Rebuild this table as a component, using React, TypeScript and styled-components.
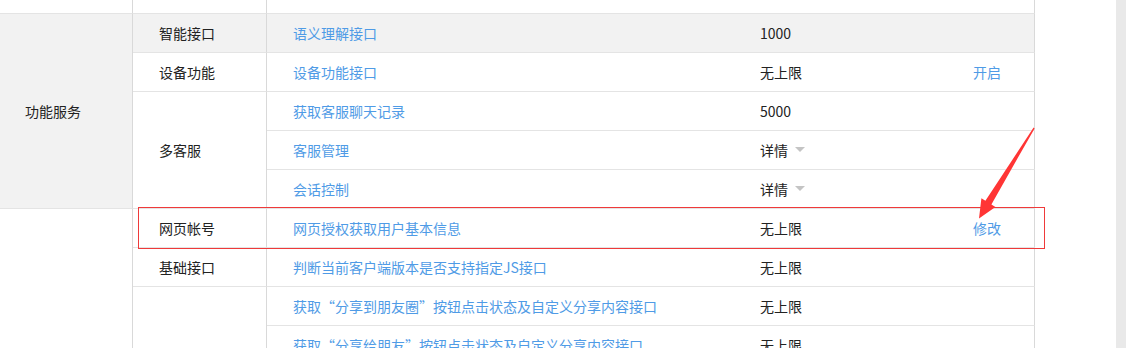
import React from "react";
import styled, { createGlobalStyle } from "styled-components";

const GlobalStyle = createGlobalStyle`
  html, body {
    margin: 0;
    padding: 0;
    background: #ffffff;
  }
  body {
    font-family: "Noto Sans CJK SC", "Noto Sans", sans-serif;
    font-size: 14px;
    color: #222222;
  }
`;

const Page = styled.div`
  display: flex;
  height: 348px;
  overflow: hidden;
`;

const Main = styled.div`
  position: relative;
  flex: 1;
  overflow: hidden;
`;

const SideStrip = styled.div`
  width: 10px;
  flex: none;
  background: #e9e9e9;
`;

const Table = styled.table`
  width: 1035px;
  margin-top: -25px;
  table-layout: fixed;
  border-collapse: separate;
  border-spacing: 0;
  font-size: 14px;
`;

const Row = styled.tr<{ $active?: boolean }>`
  background: ${(p) => (p.$active ? "#f2f2f2" : "transparent")};
`;

const Cell = styled.td<{ $pad?: number; $divider?: boolean; $shade?: boolean }>`
  height: 37px;
  padding: 0 0 1px ${(p) => p.$pad ?? 27}px;
  border-bottom: 1px solid #e4e4e4;
  border-right: ${(p) => (p.$divider ? "1px solid #d9d9d9" : "none")};
  background: ${(p) => (p.$shade ? "#f2f2f2" : "transparent")};
  vertical-align: middle;
  white-space: nowrap;
  overflow: hidden;
  line-height: 20px;
`;

const Link = styled.a`
  color: #4f9be6;
  text-decoration: none;
  cursor: pointer;
`;

const Detail = styled.span`
  display: inline-flex;
  align-items: center;
  gap: 7px;
`;

const Caret = styled.i`
  display: inline-block;
  width: 0;
  height: 0;
  border-left: 5px solid transparent;
  border-right: 5px solid transparent;
  border-top: 5px solid #c4c4c4;
`;

const Highlight = styled.div`
  position: absolute;
  left: 138px;
  top: 207px;
  width: 905px;
  height: 40px;
  border: 1px solid #ef3a3a;
  pointer-events: none;
`;

const ArrowLayer = styled.svg`
  position: absolute;
  left: 0;
  top: 0;
  pointer-events: none;
`;

type Api = {
  group?: { label: string; span: number; shade?: boolean };
  cat?: { label: string; span: number };
  name: string;
  quota: string;
  detail?: boolean;
  action?: string;
  active?: boolean;
};

const apis: Api[] = [
  { group: { label: "", span: 1 }, cat: { label: "", span: 1 }, name: "", quota: "" },
  {
    group: { label: "功能服务", span: 5, shade: true },
    cat: { label: "智能接口", span: 1 },
    name: "语义理解接口",
    quota: "1000",
    active: true,
  },
  { cat: { label: "设备功能", span: 1 }, name: "设备功能接口", quota: "无上限", action: "开启" },
  { cat: { label: "多客服", span: 3 }, name: "获取客服聊天记录", quota: "5000" },
  { name: "客服管理", quota: "详情", detail: true },
  { name: "会话控制", quota: "详情", detail: true },
  {
    group: { label: "", span: 4 },
    cat: { label: "网页帐号", span: 1 },
    name: "网页授权获取用户基本信息",
    quota: "无上限",
    action: "修改",
  },
  { cat: { label: "基础接口", span: 1 }, name: "判断当前客户端版本是否支持指定JS接口", quota: "无上限" },
  {
    cat: { label: "", span: 2 },
    name: "获取“分享到朋友圈”按钮点击状态及自定义分享内容接口",
    quota: "无上限",
  },
  { name: "获取“分享给朋友”按钮点击状态及自定义分享内容接口", quota: "无上限" },
];

export default function App() {
  return (
    <>
      <GlobalStyle />
      <Page lang="zh-CN">
        <Main>
          <Table>
            <colgroup>
              <col style={{ width: 133 }} />
              <col style={{ width: 134 }} />
              <col style={{ width: 466 }} />
              <col style={{ width: 213 }} />
              <col style={{ width: 89 }} />
            </colgroup>
            <tbody>
              {apis.map((api, i) => (
                <Row key={i} $active={api.active}>
                  {api.group && (
                    <Cell rowSpan={api.group.span} $pad={25} $divider $shade={api.group.shade}>
                      {api.group.label}
                    </Cell>
                  )}
                  {api.cat && (
                    <Cell rowSpan={api.cat.span} $pad={26} $divider>
                      {api.cat.label}
                    </Cell>
                  )}
                  <Cell $pad={26}>{api.name && <Link>{api.name}</Link>}</Cell>
                  <Cell $pad={27}>
                    {api.detail ? (
                      <Detail>
                        {api.quota}
                        <Caret />
                      </Detail>
                    ) : (
                      api.quota
                    )}
                  </Cell>
                  <Cell $pad={27} $divider>
                    {api.action && <Link>{api.action}</Link>}
                  </Cell>
                </Row>
              ))}
            </tbody>
          </Table>
          <Highlight />
          <ArrowLayer width="1116" height="348" viewBox="0 0 1116 348">
            <polygon
              points="1033.6,127.6 1034.6,128.4 991.4,204.4 995.4,207 979,218.5 981.4,198.2 985.4,200.8"
              fill="#ff3535"
            />
          </ArrowLayer>
        </Main>
        <SideStrip />
      </Page>
    </>
  );
}
